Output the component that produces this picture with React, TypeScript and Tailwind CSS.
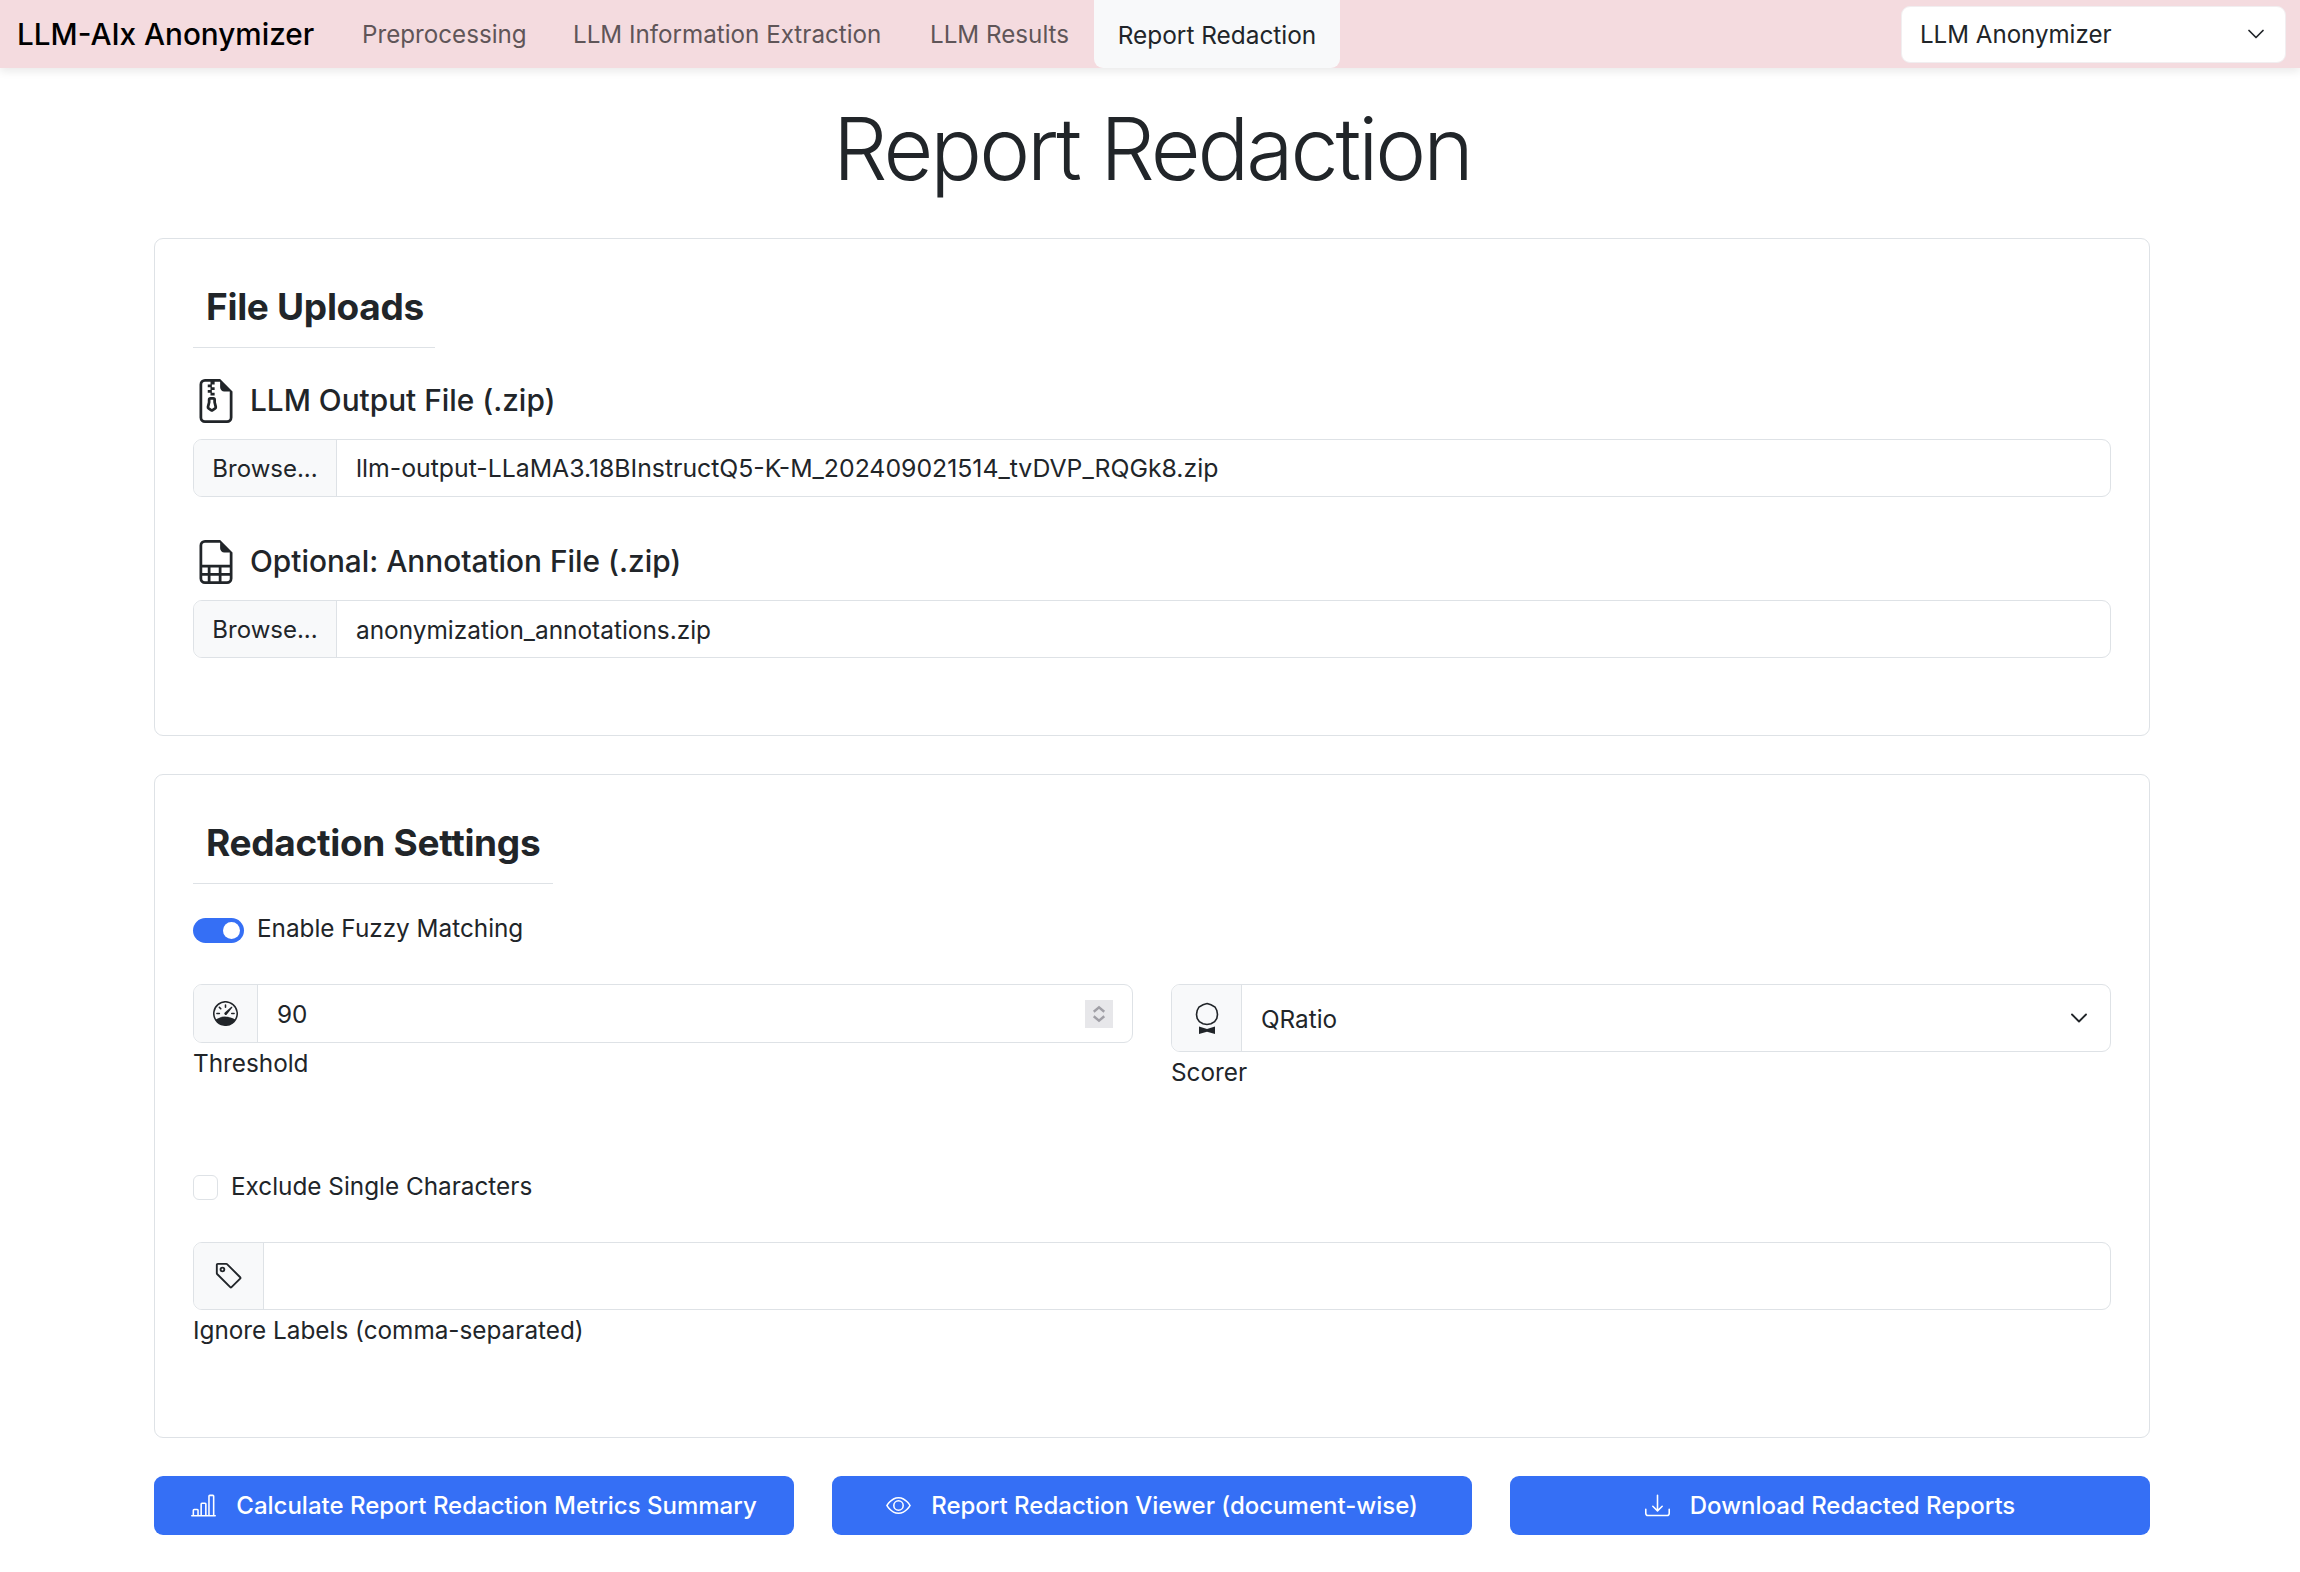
import { BsBarChartLine, BsDownload, BsEye, BsFileEarmarkSpreadsheet, BsFileEarmarkZip, BsSpeedometer, BsTag } from 'react-icons/bs';
import { ChevronDown } from 'lucide-react';

const addonClass = 'flex shrink-0 items-center justify-center border-r border-[#dee2e6] bg-[#f8f9fa]';
const groupClass = 'flex overflow-hidden rounded-[9px] border border-[#dee2e6] bg-white';

function FileField({ icon, label, file, fileSize }: { icon: React.ReactNode; label: string; file: string; fileSize: string }) {
  return (
    <div>
      <div className="flex h-[46px] items-center gap-[12px] pl-[1px] text-[29.8px] font-medium text-[#212529]">
        {icon}
        <span className="pb-[1px]">{label}</span>
      </div>
      <div className={`${groupClass} mt-[15px] h-[58px]`}>
        <div className={`${addonClass} w-[143px] pt-[2px] text-[24px]`}>Browse...</div>
        <div className={`flex items-center pt-[2px] pl-[19px] ${fileSize}`}>{file}</div>
      </div>
    </div>
  );
}

function SectionTitle({ children, width }: { children: string; width: string }) {
  return (
    <div className={`${width} border-b border-[#dee2e6] pt-[3px] pb-[13px] pl-[13px] text-[37px] leading-[54px] font-bold tracking-[-0.3px] text-[#212529]`}>
      {children}
    </div>
  );
}

function ActionButton({ icon, label }: { icon: React.ReactNode; label: string }) {
  return (
    <button className="flex h-[59px] flex-1 items-center justify-center gap-[20px] rounded-[9px] bg-[#356ff5] text-[24px] font-medium text-white">
      {icon}
      {label}
    </button>
  );
}

function AwardIcon() {
  return (
    <svg viewBox="0 0 24 32" className="h-[32px] w-[24px]" aria-hidden="true">
      <path d="M12 1.5 16 2.8 20 5l1.8 3.4.7 4.1-.7 4-2.2 3.2-3.6 2-4 .8-4-.8-3.6-2-2.2-3.2-.7-4 .7-4.1L4 5l4-2.2Z" fill="none" stroke="#212529" strokeWidth="1.6" />
      <path d="M4 24.5 12 27l8-2.5V32l-8-2.2L4 32Z" fill="#212529" />
    </svg>
  );
}

export default function App() {
  return (
    <div className="min-h-[1572px] bg-white font-['Inter',sans-serif] text-[24.3px] text-[#212529]">
      <nav className="flex h-[68px] items-center bg-[#f4dbdf] pr-[14px] pl-[17px] shadow-[0_4px_8px_rgba(0,0,0,0.08)]">
        <div className="w-[345px] text-[29.7px] font-medium text-black">LLM-AIx Anonymizer</div>
        <div className="flex h-full items-center text-[24.2px] text-[#5f5558]">
          <div className="w-[211px] pt-[2px]">Preprocessing</div>
          <div className="w-[357px] pt-[2px]">LLM Information Extraction</div>
          <div className="w-[164px] pt-[2px]">LLM Results</div>
          <div className="flex h-full w-[246px] items-center justify-center rounded-b-[9px] bg-[#f8f9fa] pt-[2px] text-[24.4px] text-[#212529]">Report Redaction</div>
        </div>
        <div className="ml-auto flex h-[57px] w-[385px] items-center justify-between rounded-[9px] border border-[#f1eef0] bg-white pr-[15px] pl-[18px] text-[24.1px]">
          <span className="pt-[2px]">LLM Anonymizer</span>
          <ChevronDown size={28} strokeWidth={1.5} />
        </div>
      </nav>

      <main className="mr-[150px] ml-[154px] flex flex-col">
        <h1 className="mt-[27px] text-center text-[86px] leading-[108px] font-light tracking-[-3px] text-[#212529]">Report Redaction</h1>

        <section className="mt-[35px] h-[498px] rounded-[9px] border border-[#dee2e6] px-[38px] pt-[38px]">
          <SectionTitle width="w-[242px]">File Uploads</SectionTitle>
          <div className="mt-[30px] flex flex-col gap-[42px]">
            <FileField icon={<BsFileEarmarkZip size={44} />} label="LLM Output File (.zip)" file="llm-output-LLaMA3.18BInstructQ5-K-M_202409021514_tvDVP_RQGk8.zip" fileSize="text-[24.8px]" />
            <FileField icon={<BsFileEarmarkSpreadsheet size={44} />} label="Optional: Annotation File (.zip)" file="anonymization_annotations.zip" fileSize="text-[24.4px]" />
          </div>
        </section>

        <section className="mt-[38px] h-[664px] rounded-[9px] border border-[#dee2e6] px-[38px] pt-[38px]">
          <SectionTitle width="w-[360px]">Redaction Settings</SectionTitle>

          <div className="mt-[30px] flex h-[32px] items-center gap-[13px]">
            <div className="flex h-[25px] w-[51px] items-center justify-end rounded-full bg-[#356ff5] px-[4px]">
              <div className="h-[17px] w-[17px] rounded-full bg-white" />
            </div>
            <span className="pb-[3px]">Enable Fuzzy Matching</span>
          </div>

          <div className="mt-[38px] grid grid-cols-2 gap-[38px]">
            <div>
              <div className={`${groupClass} h-[59px]`}>
                <div className={`${addonClass} w-[64px]`}><BsSpeedometer size={25} /></div>
                <div className="flex flex-1 items-center justify-between pr-[19px] pl-[19px]">
                  <span className="pt-[2px]">90</span>
                  <div className="flex h-[28px] w-[28px] flex-col items-center justify-center bg-[#e7e7ea] text-[#a09fa6]">
                    <svg viewBox="0 0 16 16" className="h-[24px] w-[24px]" fill="none" stroke="currentColor" strokeWidth="1.6">
                      <path d="M4.5 6.5 8 3.5l3.5 3M4.5 9.5 8 12.5l3.5-3" />
                    </svg>
                  </div>
                </div>
              </div>
              <div className="mt-[1px] leading-[38px]">Threshold</div>
            </div>
            <div>
              <div className={`${groupClass} h-[68px]`}>
                <div className={`${addonClass} w-[70px]`}><AwardIcon /></div>
                <div className="flex flex-1 items-center justify-between pr-[17px] pl-[19px]">
                  <span className="pt-[2px]">QRatio</span>
                  <ChevronDown size={28} strokeWidth={1.6} />
                </div>
              </div>
              <div className="mt-[1px] leading-[38px]">Scorer</div>
            </div>
          </div>

          <div className="mt-[80px] flex h-[32px] items-center gap-[13px]">
            <div className="h-[25px] w-[25px] rounded-[6px] border border-[#dee2e6]" />
            <span className="pb-[2px]">Exclude Single Characters</span>
          </div>

          <div className={`${groupClass} mt-[39px] h-[68px]`}>
            <div className={`${addonClass} w-[70px]`}><BsTag size={30} /></div>
          </div>
          <div className="mt-[1px] leading-[38px]">Ignore Labels (comma-separated)</div>
        </section>

        <div className="mt-[38px] flex gap-[38px]">
          <ActionButton icon={<BsBarChartLine size={25} />} label="Calculate Report Redaction Metrics Summary" />
          <ActionButton icon={<BsEye size={25} />} label="Report Redaction Viewer (document-wise)" />
          <ActionButton icon={<BsDownload size={25} />} label="Download Redacted Reports" />
        </div>
      </main>
    </div>
  );
}
